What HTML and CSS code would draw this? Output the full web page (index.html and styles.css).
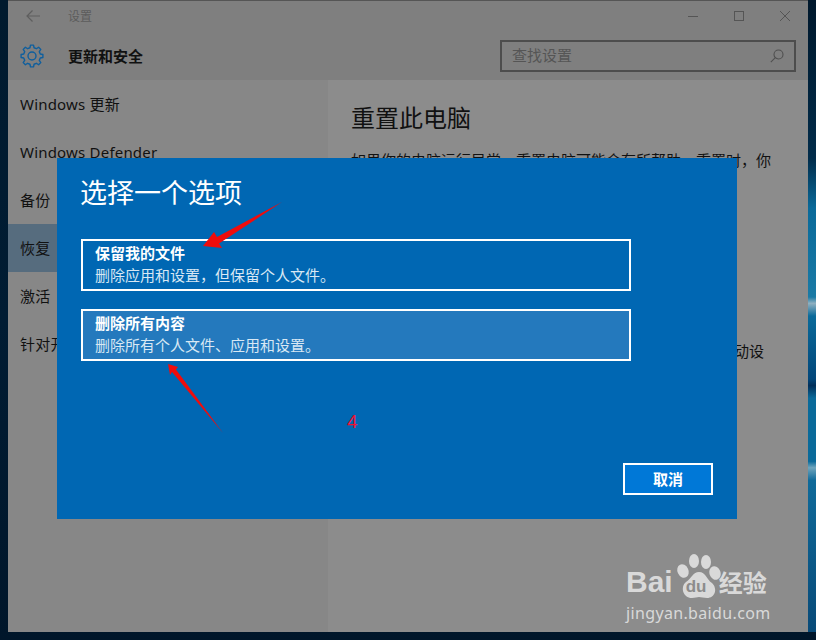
FILE: index.html
```html
<!DOCTYPE html>
<html lang="zh-CN">
<head>
    <meta charset="UTF-8">
    <title>设置</title>
    <link rel="stylesheet" href="styles.css">
</head>
<body>
    <div class="desktop">
        <div class="window">
            <header class="window-head">
                <div class="titlebar">
                    <svg class="back-icon" width="16" height="14" viewBox="0 0 16 14"><path d="M15 7H2M7.500 1.500L2 7l5.500 5.500" fill="none" stroke="#5f5f5f" stroke-width="1.200"/></svg>
                    <span class="app-name">设置</span>
                    <div class="win-controls">
                        <svg width="12" height="12" viewBox="0 0 12 12"><path d="M1 6.500h10" stroke="#555" stroke-width="1"/></svg>
                        <svg width="12" height="12" viewBox="0 0 12 12"><rect x="1.500" y="1.500" width="9" height="9" fill="none" stroke="#555"/></svg>
                        <svg width="12" height="12" viewBox="0 0 12 12"><path d="M1 1l10 10M11 1L1 11" stroke="#555" stroke-width="1"/></svg>
                    </div>
                </div>
                <div class="toolbar">
                    <svg class="gear-icon" width="24" height="24" viewBox="-12 -12 24 24">
                        <path d="M10.89-1.530L10.89 1.530L8.250 2.060L7.290 4.380L8.780 6.620L6.620 8.780L4.380 7.290L2.060 8.250L1.530 10.890L-1.530 10.890L-2.060 8.250L-4.380 7.290L-6.620 8.780L-8.780 6.620L-7.290 4.380L-8.250 2.060L-10.890 1.530L-10.890-1.530L-8.250-2.060L-7.290-4.380L-8.780-6.620L-6.620-8.780L-4.380-7.290L-2.060-8.250L-1.530-10.890L1.530-10.890L2.060-8.250L4.380-7.290L6.620-8.780L8.780-6.620L7.290-4.380L8.250-2.060Z" fill="none" stroke="#0f5f9e" stroke-width="1.400" stroke-linejoin="round"/>
                        <circle r="4" fill="none" stroke="#0f5f9e" stroke-width="1.400"/>
                    </svg>
                    <h2 class="section-name">更新和安全</h2>
                    <div class="search-box">
                        <span class="search-text">查找设置</span>
                        <svg width="14" height="14" viewBox="0 0 14 14"><circle cx="8.500" cy="5.500" r="4.500" fill="none" stroke="#4f4f4f" stroke-width="1.100"/><path d="M5.300 8.700L.8 13.200" stroke="#4f4f4f" stroke-width="1.100"/></svg>
                    </div>
                </div>
            </header>
            <div class="window-body">
                <nav class="sidebar">
                    <div class="nav-item">Windows 更新</div>
                    <div class="nav-item">Windows Defender</div>
                    <div class="nav-item">备份</div>
                    <div class="nav-item selected">恢复</div>
                    <div class="nav-item">激活</div>
                    <div class="nav-item">针对开发人员</div>
                </nav>
                <main class="content">
                    <h1>重置此电脑</h1>
                    <p>如果你的电脑运行异常，重置电脑可能会有所帮助。重置时，你</p>
                    <p class="lower-text">可以选择保留个人文件或删除个人文件，然后重新自动设</p>
                </main>
            </div>
        </div>

        <div class="dialog">
            <h2 class="dialog-title">选择一个选项</h2>
            <div class="option">
                <strong>保留我的文件</strong>
                <span>删除应用和设置，但保留个人文件。</span>
            </div>
            <div class="option hover">
                <strong>删除所有内容</strong>
                <span>删除所有个人文件、应用和设置。</span>
            </div>
            <div class="dialog-actions">
                <button type="button">取消</button>
            </div>
        </div>

        <!-- red annotations on top of the screenshot -->
        <svg class="arrows" width="816" height="640" viewBox="0 0 816 640">
            <polygon points="282,202 219,243.500 222,248 203,246 214,232 217,237" fill="#f00c0c"/>
            <polygon points="223,433 172,372 170,375 168,364 178,367 176,369.500" fill="#f00c0c"/>
        </svg>
        <span class="step-number">4</span>

        <div class="watermark">
            <div class="logo-row">
                <span class="logo-bai">Bai</span>
                <span class="paw">
                    <svg width="46" height="46" viewBox="0 0 46 46">
                        <ellipse cx="8" cy="17" rx="5.500" ry="7" transform="rotate(-25 8 17)" fill="#d9d9d9"/>
                        <ellipse cx="19" cy="7" rx="5" ry="7" fill="#d9d9d9"/>
                        <ellipse cx="31" cy="8" rx="5" ry="7" fill="#d9d9d9"/>
                        <ellipse cx="40" cy="19" rx="5.500" ry="7" transform="rotate(-20 40 19)" fill="#d9d9d9"/>
                        <path d="M24 18c-6 0-7 6-13 10-6 5-3 16 6 16 3 0 5-1 7-1s5 1 8 1c8 0 11-9 5-15-6-4-6-11-13-11z" fill="#d9d9d9"/>
                    </svg>
                    <span class="paw-du">du</span>
                </span>
                <span class="logo-cn">经验</span>
            </div>
            <div class="logo-url">jingyan.baidu.com</div>
        </div>
    </div>
</body>
</html>
```

FILE: styles.css
```css
body {
    margin: 0;
    font-family: "Noto Sans", "Noto Sans CJK SC", sans-serif;
}
.desktop {
    position: relative;
    width: 816px;
    height: 640px;
    overflow: hidden;
    background: linear-gradient(180deg, #001a2e 0%, #001c33 50%, #00162a 100%);
}
.desktop::after {
    content: "";
    position: absolute;
    top: 0;
    right: 0;
    width: 8px;
    height: 632px;
    background: linear-gradient(180deg, #00182c 0%, #012c4a 25%, #0a6a9a 33%, #1a7aa5 47%, #8fb0c0 48%, #0a6a9a 50%, #02477a 60%, #012f5a 61%, #0a6a9a 63%, #0a6a9a 73%, #6fa5bd 74%, #0f6a9a 76%, #084a78 100%);
}
.window {
    position: absolute;
    left: 8px;
    top: 0;
    width: 800px;
    height: 632px;
    border-top: 1px solid #555;
    box-sizing: border-box;
    display: flex;
    flex-direction: column;
    color: #111;
    z-index: 1;
}
.window-head {
    background-color: #7f7f7f;
    height: 79px;
    flex: none;
}
.titlebar {
    height: 31px;
    box-sizing: border-box;
    padding-bottom: 1px;
    display: flex;
    align-items: center;
}
.back-icon {
    margin-left: 17px;
}
.app-name {
    margin-left: 27px;
    padding-bottom: 1px;
    font-size: 12px;
    color: #5c5c5c;
}
.win-controls {
    margin-left: auto;
    padding-right: 17px;
    display: flex;
    gap: 34px;
}
.toolbar {
    height: 48px;
    display: flex;
    align-items: center;
    padding: 0 12px;
}
.section-name {
    margin: 0 0 0 24px;
    padding-bottom: 2px;
    font-size: 15px;
    font-weight: bold;
}
.search-box {
    margin-left: auto;
    width: 296px;
    height: 32px;
    box-sizing: border-box;
    border: 2px solid #4d4d4d;
    padding: 0 10px;
    display: flex;
    align-items: center;
    justify-content: space-between;
    font-size: 15px;
    color: #555;
}
.search-text {
    padding-bottom: 3px;
}
.window-body {
    flex: 1;
    display: flex;
}
.sidebar {
    width: 320px;
    background-color: #878787;
}
.nav-item {
    height: 48px;
    line-height: 48px;
    padding-left: 12px;
    font-size: 15px;
    letter-spacing: 0.2px;
    white-space: nowrap;
}
.selected {
    background-color: #566c7e;
}
.content {
    flex: 1;
    background-color: #8c8c8c;
    padding: 20px 23px;
}
.content h1 {
    margin: 0;
    font-size: 24px;
    font-weight: normal;
    line-height: 36px;
}
.content p {
    margin: 11px 0 0;
    font-size: 15px;
    line-height: 26px;
    white-space: nowrap;
}
.content p.lower-text {
    margin-top: 165px;
    padding-left: 38px;
}
.dialog {
    position: absolute;
    left: 57px;
    top: 158px;
    width: 680px;
    height: 361px;
    box-sizing: border-box;
    padding: 16px 24px 24px;
    background-color: #0067b3;
    color: white;
    display: flex;
    flex-direction: column;
    z-index: 2;
}
.dialog-title {
    margin: 0 0 27px -1px;
    font-size: 27px;
    font-weight: normal;
    line-height: 38px;
}
.option {
    width: 550px;
    height: 52px;
    box-sizing: border-box;
    border: 2px solid white;
    padding: 2px 12px;
    margin-bottom: 18px;
    display: flex;
    flex-direction: column;
    font-size: 15px;
    line-height: 21px;
}
.option strong {
    font-size: 15px;
    margin-bottom: 1px;
}
.option span {
    color: #d8e8f4;
}
.hover {
    background-color: #2479bd;
}
.dialog-actions {
    margin-top: auto;
    display: flex;
    justify-content: flex-end;
}
button {
    width: 90px;
    height: 32px;
    background-color: #0078d7;
    border: 2px solid white;
    color: white;
    font-family: inherit;
    font-size: 15px;
    font-weight: bold;
    padding: 0 0 2px;
}
.arrows {
    position: absolute;
    left: 0;
    top: 0;
    z-index: 3;
}
.step-number {
    position: absolute;
    left: 347px;
    top: 410px;
    font-family: "Noto Sans", sans-serif;
    font-size: 18px;
    line-height: 22px;
    color: #f01030;
    z-index: 3;
}
.watermark {
    position: absolute;
    left: 626px;
    top: 552px;
    width: 146px;
    color: #d9d9d9;
    z-index: 3;
}
.logo-row {
    display: flex;
    align-items: flex-end;
    height: 48px;
}
.logo-bai {
    font-family: "Liberation Sans", sans-serif;
    font-weight: bold;
    font-size: 30px;
    line-height: 36px;
}
.paw {
    position: relative;
    margin-left: 2px;
    margin-right: -2px;
    width: 46px;
    height: 46px;
    flex: none;
}
.paw-du {
    position: absolute;
    left: 11px;
    top: 24px;
    font-family: "Liberation Sans", sans-serif;
    font-weight: bold;
    font-size: 17px;
    line-height: 18px;
    color: #8c8c8c;
}
.logo-cn {
    font-size: 24px;
    font-weight: bold;
    line-height: 34px;
    white-space: nowrap;
}
.logo-url {
    font-size: 16px;
    line-height: 22px;
    margin-top: 2px;
    letter-spacing: 0.35px;
    white-space: nowrap;
}
```
